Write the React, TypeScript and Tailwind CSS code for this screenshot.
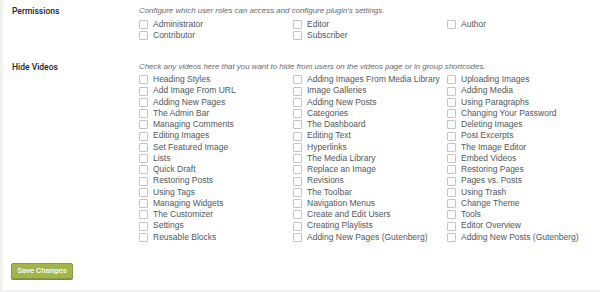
const permissions = ["Administrator", "Editor", "Author", "Contributor", "Subscriber"];

const videos = [
  "Heading Styles", "Adding Images From Media Library", "Uploading Images",
  "Add Image From URL", "Image Galleries", "Adding Media",
  "Adding New Pages", "Adding New Posts", "Using Paragraphs",
  "The Admin Bar", "Categories", "Changing Your Password",
  "Managing Comments", "The Dashboard", "Deleting Images",
  "Editing Images", "Editing Text", "Post Excerpts",
  "Set Featured Image", "Hyperlinks", "The Image Editor",
  "Lists", "The Media Library", "Embed Videos",
  "Quick Draft", "Replace an Image", "Restoring Pages",
  "Restoring Posts", "Revisions", "Pages vs. Posts",
  "Using Tags", "The Toolbar", "Using Trash",
  "Managing Widgets", "Navigation Menus", "Change Theme",
  "The Customizer", "Create and Edit Users", "Tools",
  "Settings", "Creating Playlists", "Editor Overview",
  "Reusable Blocks", "Adding New Pages (Gutenberg)", "Adding New Posts (Gutenberg)",
];

const Check = ({ label }: { label: string }) => (
  <label className="flex items-center h-[11.25px] leading-[11.25px] text-[8.5px] text-[#50575e] whitespace-nowrap">
    <span className="w-[9px] h-[9px] mr-[5px] shrink-0 border border-[#c3c4c7] bg-white rounded-[1px]" />
    {label}
  </label>
);

const Section = ({ title, desc, items }: { title: string; desc: string; items: string[] }) => (
  <div className="flex">
    <div className="w-[127px] shrink-0 text-[8.5px] leading-[12px] font-medium text-[#1d2327] font-[Roboto,sans-serif]">{title}</div>
    <div>
      <p className="text-[7.9px] leading-[12px] italic text-[#646970] mb-[1.5px] whitespace-nowrap">{desc}</p>
      <div className="grid grid-cols-[154px_154px_154px]">
        {items.map((it) => (
          <Check key={it} label={it} />
        ))}
      </div>
    </div>
  </div>
);

export default function App() {
  return (
    <div className="w-[600px] h-[292px] bg-[#f1f1f1] overflow-hidden" style={{ fontFamily: '"Liberation Sans", Arial, sans-serif' }}>
      <div className="ml-[3px] h-[290px] bg-white pl-[9px] pt-[5px]">
        <Section
          title="Permissions"
          desc="Configure which user roles can access and configure plugin's settings."
          items={permissions}
        />
        <div className="mt-[19.7px]">
          <Section
            title="Hide Videos"
            desc="Check any videos here that you want to hide from users on the videos page or in group shortcodes."
            items={videos}
          />
        </div>
        <button className="mt-[20.4px] -ml-[1px] w-[62px] h-[16px] rounded-[2px] bg-[#a2b44a] border border-[#8a9c3a] text-white text-[7.8px] font-medium font-[Roboto,sans-serif] leading-[14px] shadow-[0_1px_0_#7d8d33]">
          Save Changes
        </button>
      </div>
    </div>
  );
}
